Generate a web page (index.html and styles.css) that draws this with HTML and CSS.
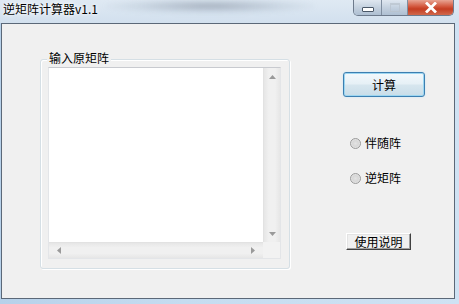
FILE: index.html
```html
<!DOCTYPE html>
<html>
<head>
<meta charset="utf-8">
<link rel="stylesheet" href="styles.css">
</head>
<body>
<div class="window">
  <div class="titlebar">
    <div class="blur"></div>
    <span class="title">逆矩阵计算器v1.1</span>
    <div class="caption-btns">
      <div class="cbtn min"><span class="min-glyph"></span></div>
      <div class="cbtn max"><span class="max-glyph"></span></div>
      <div class="cbtn close">
        <svg width="14" height="11" viewBox="0 0 14 11"><path d="M3 1.5 L11 9.5 M11 1.5 L3 9.5" stroke="#fff" stroke-width="2.8" stroke-linecap="square"/></svg>
      </div>
    </div>
  </div>
  <div class="client">
    <div class="left">
      <div class="group">
        <span class="legend">输入原矩阵</span>
        <div class="textarea">
          <div class="row-top">
            <div class="content"></div>
            <div class="vscroll">
              <svg width="7" height="4" viewBox="0 0 7 4"><path d="M0 4 L3.5 0 L7 4 Z" fill="#9a9a9a"/></svg>
              <svg width="7" height="4" viewBox="0 0 7 4"><path d="M0 0 L3.5 4 L7 0 Z" fill="#9a9a9a"/></svg>
            </div>
          </div>
          <div class="row-bottom">
            <div class="hscroll">
              <svg width="4" height="7" viewBox="0 0 4 7"><path d="M4 0 L0 3.5 L4 7 Z" fill="#9a9a9a"/></svg>
              <svg width="4" height="7" viewBox="0 0 4 7"><path d="M0 0 L4 3.5 L0 7 Z" fill="#9a9a9a"/></svg>
            </div>
            <div class="corner"></div>
          </div>
        </div>
      </div>
    </div>
    <div class="right">
      <button class="btn-calc">计算</button>
      <label class="radio"><span class="dot"></span>伴随阵</label>
      <label class="radio r2"><span class="dot"></span>逆矩阵</label>
      <button class="btn-help">使用说明</button>
    </div>
  </div>
</div>
</body>
</html>
```

FILE: styles.css
```css
html, body {
  margin: 0;
  padding: 0;
  width: 459px;
  height: 304px;
  overflow: hidden;
  font-family: "Noto Sans CJK SC", "Liberation Sans", sans-serif;
}
.window {
  width: 459px;
  height: 304px;
  background: linear-gradient(90deg, #b7d1ea 0%, #c5dcf0 40%, #cfe2f3 100%);
  display: flex;
  flex-direction: column;
  padding: 0 4px 5px 1px;
  box-sizing: border-box;
}
.titlebar {
  height: 23px;
  position: relative;
  background: linear-gradient(180deg, #dfe9f3 0%, #d2e0ee 100%);
  margin: 0 -4px 0 -1px;
  padding: 0 4px 0 1px;
}
.blur {
  position: absolute;
  left: 105px;
  top: -2px;
  width: 210px;
  height: 16px;
  background: radial-gradient(ellipse at center, rgba(70,80,100,0.35) 0%, rgba(120,140,160,0.15) 50%, rgba(200,220,235,0) 75%);
  filter: blur(2px);
}
.title {
  position: absolute;
  left: 3px;
  top: 2px;
  font-size: 12px;
  line-height: 14px;
  color: #000;
  text-shadow: 0 0 6px #fff, 0 0 3px #fff;
}
.caption-btns {
  position: absolute;
  right: 5px;
  top: 0;
  display: flex;
  height: 15px;
  border: 1px solid #6d7a8c;
  border-top: none;
  border-radius: 0 0 5px 5px;
  overflow: hidden;
}
.cbtn {
  height: 15px;
  display: flex;
  align-items: center;
  justify-content: center;
}
.min {
  width: 27px;
  background: linear-gradient(180deg, #dfe7f0 0%, #c4d1df 50%, #aebfd2 100%);
  border-right: 1px solid #7f8ea0;
}
.max {
  width: 25px;
  background: linear-gradient(180deg, #dfe7f0 0%, #c4d1df 50%, #aebfd2 100%);
  border-right: 1px solid #7f8ea0;
}
.close {
  width: 45px;
  background: linear-gradient(180deg, #e8a493 0%, #d2543a 45%, #c43d22 60%, #d0684c 100%);
}
.min-glyph {
  width: 10px;
  height: 3px;
  margin-top: 3px;
  background: #fff;
  border: 1px solid #4a5868;
  border-radius: 1px;
}
.max-glyph {
  width: 8px;
  height: 6px;
  border: 1px solid #b8c2cc;
  border-top-width: 2px;
  opacity: 0.7;
}
.client {
  flex: 1;
  background: #f0f0f0;
  border: 1px solid #5b6878;
  display: flex;
  box-sizing: border-box;
}
.left {
  padding: 35px 0 0 38px;
}
.group {
  position: relative;
  width: 250px;
  height: 210px;
  border: 1px solid #d5dfe5;
  box-shadow: inset 1px 1px 0 #fff, 1px 1px 0 #fff;
  border-radius: 3px;
  box-sizing: border-box;
  padding: 7px 0 0 7px;
}
.legend {
  position: absolute;
  left: 6px;
  top: -10px;
  padding: 0 2px;
  background: #f0f0f0;
  font-size: 12px;
  line-height: 15px;
  color: #000;
}
.textarea {
  width: 233px;
  height: 192px;
  background: #fff;
  border: 1px solid;
  border-color: #c8cacf #e3e5e8 #e3e5e8 #e3e5e8;
  box-sizing: border-box;
  display: flex;
  flex-direction: column;
}
.row-top {
  flex: 1;
  display: flex;
}
.content {
  flex: 1;
}
.vscroll {
  width: 16px;
  background: linear-gradient(90deg, #e6e6e6, #f0f0f0 30%, #f0f0f0 70%, #e6e6e6);
  display: flex;
  flex-direction: column;
  justify-content: space-between;
  align-items: center;
  padding: 7px 0 6px;
  border-left: 1px solid #e2e2e2;
}
.row-bottom {
  height: 16px;
  display: flex;
}
.hscroll {
  flex: 1;
  background: linear-gradient(180deg, #e6e6e6, #f0f0f0 30%, #f0f0f0 70%, #e6e6e6);
  display: flex;
  justify-content: space-between;
  align-items: center;
  padding: 0 8px 0 8px;
  border-top: 1px solid #e2e2e2;
}
.corner {
  width: 17px;
  background: #f2f2f2;
}
.right {
  display: flex;
  flex-direction: column;
  align-items: flex-start;
  padding: 48px 0 0 53px;
}
.btn-calc {
  width: 82px;
  height: 25px;
  font-family: "Noto Sans CJK SC", sans-serif;
  font-size: 12px;
  color: #000;
  background: linear-gradient(180deg, #f3f9fc 0%, #e6f0f6 48%, #d7e6ee 52%, #c8dde9 100%);
  border: 1px solid #3c7fb1;
  border-radius: 3px;
  box-shadow: inset 0 0 0 1px #9cd6f1, 0 0 2px #bfe4f7;
  padding: 0;
  margin: 0;
}
.radio {
  display: flex;
  align-items: center;
  font-size: 12px;
  line-height: 16px;
  color: #000;
  margin: 38px 0 0 7px;
}
.radio.r2 {
  margin-top: 19px;
}
.dot {
  width: 11px;
  height: 11px;
  border-radius: 50%;
  border: 1px solid #9a9a9a;
  box-sizing: border-box;
  background: radial-gradient(circle at 50% 50%, #e4e4e4 0%, #d7d7d7 45%, #f5f5f5 100%);
  margin-right: 4px;
}
.btn-help {
  margin: 47px 0 0 3px;
  width: 65px;
  height: 17px;
  font-family: "Noto Sans CJK SC", sans-serif;
  font-size: 12px;
  line-height: 13px;
  color: #000;
  background: #f0f0f0;
  border: 1px solid;
  border-color: #fff #404040 #404040 #fff;
  box-shadow: inset -1px -1px 0 #a0a0a0, inset 1px 1px 0 #e3e3e3;
  padding: 0;
  border-radius: 0;
}
```
